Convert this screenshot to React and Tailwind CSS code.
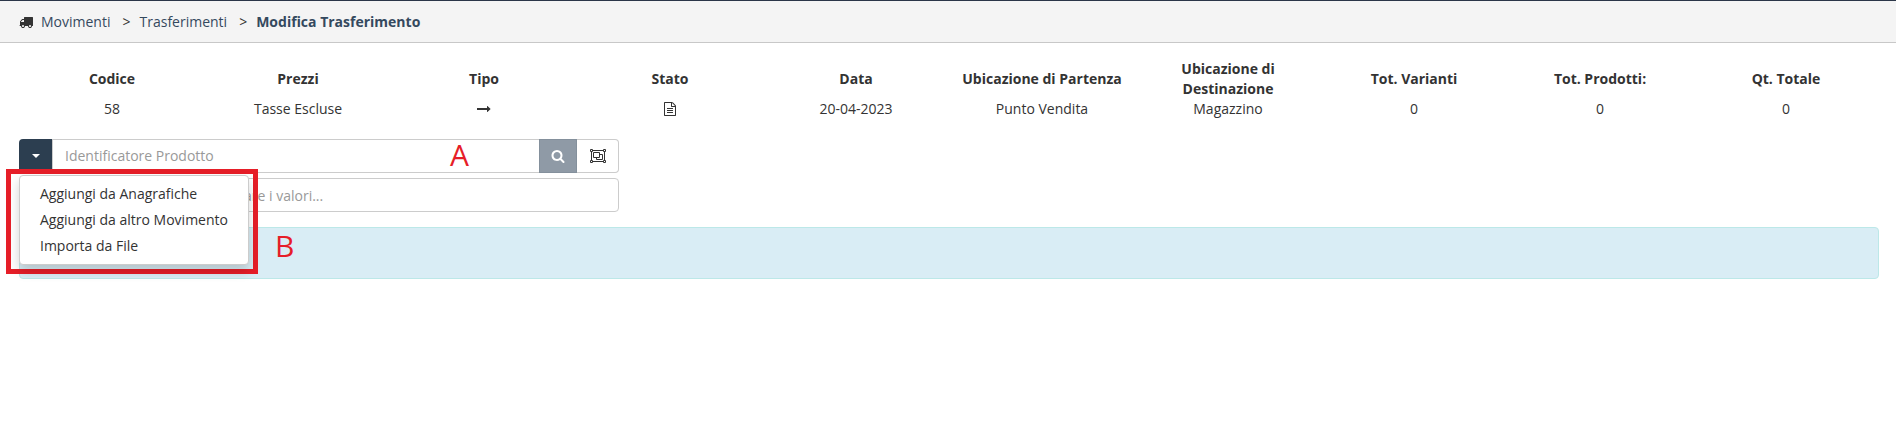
import React from 'react';

const Icon = ({ path, className }) => (
  <svg viewBox="0 0 1792 1792" fill="currentColor" className={className} aria-hidden="true">
    <path d={path} />
  </svg>
);

const TRUCK =
  'M640 1408q0-52-38-90t-90-38-90 38-38 90 38 90 90 38 90-38 38-90zm-384-512h384v-256h-158q-13 0-22 9l-195 195q-9 9-9 22v30zm1280 512q0-52-38-90t-90-38-90 38-38 90 38 90 90 38 90-38 38-90zm256-1088v1024q0 15-4 26.5t-13.5 18.5-16.5 11.5-23.5 6-22.5 2-25.5 0-22.5-.5q0 106-75 181t-181 75-181-75-75-181h-384q0 106-75 181t-181 75-181-75-75-181h-64q-3 0-22.5.5t-25.5 0-22.5-2-23.5-6-16.5-11.5-13.5-18.5-4-26.5q0-26 19-45t45-19v-320q0-8-.5-35t0-38 2.5-34.5 6.5-37 14-30.5 22.5-30l198-198q19-19 50.5-32t58.5-13h160v-192q0-26 19-45t45-19h1024q26 0 45 19t19 45z';
const ARROW =
  'M1728 893q0 14-10 24l-384 354q-16 14-35 6-19-9-19-29v-224h-1248q-14 0-23-9t-9-23v-192q0-14 9-23t23-9h1248v-224q0-21 19-29t35 5l384 350q10 10 10 23z';
const FILE_TEXT =
  'M1596 380q28 28 48 76t20 88v1152q0 40-28 68t-68 28h-1344q-40 0-68-28t-28-68v-1600q0-40 28-68t68-28h896q40 0 88 20t76 48zm-444-244v376h376q-10-29-22-41l-313-313q-12-12-41-22zm384 1528v-1024h-416q-40 0-68-28t-28-68v-416h-768v1536h1280zm-1024-864q0-14 9-23t23-9h704q14 0 23 9t9 23v64q0 14-9 23t-23 9h-704q-14 0-23-9t-9-23v-64zm736 224q14 0 23 9t9 23v64q0 14-9 23t-23 9h-704q-14 0-23-9t-9-23v-64q0-14 9-23t23-9h704zm0 256q14 0 23 9t9 23v64q0 14-9 23t-23 9h-704q-14 0-23-9t-9-23v-64q0-14 9-23t23-9h704z';
const SEARCH =
  'M1216 832q0-185-131.5-316.5t-316.5-131.5-316.5 131.5-131.5 316.5 131.5 316.5 316.5 131.5 316.5-131.5 131.5-316.5zm512 832q0 52-38 90t-90 38q-54 0-90-38l-343-342q-179 124-399 124-143 0-273.5-55.5t-225-150-150-225-55.5-273.5 55.5-273.5 150-225 225-150 273.5-55.5 273.5 55.5 225 150 150 225 55.5 273.5q0 220-124 399l343 343q37 37 37 90z';

const ObjectGroupIcon = () => (
  <svg viewBox="0 0 16 14" className="h-3.5 w-4" fill="none" stroke="currentColor" aria-hidden="true">
    <path d="M2.5 1.5h11M2.5 12.5h11M1.5 2.5v9M14.5 2.5v9" />
    <path d="M.5.5h2v2h-2zM13.5.5h2v2h-2zM.5 11.5h2v2h-2zM13.5 11.5h2v2h-2z" />
    <path d="M3.5 3.5h6v5h-6zM9.5 5.5h3v5h-6v-2" />
  </svg>
);

const columns = [
  { label: 'Codice', value: '58' },
  { label: 'Prezzi', value: 'Tasse Escluse' },
  { label: 'Tipo', value: <Icon path={ARROW} className="mx-auto size-3.5" /> },
  { label: 'Stato', value: <Icon path={FILE_TEXT} className="mx-auto size-3.5" /> },
  { label: 'Data', value: '20-04-2023' },
  { label: 'Ubicazione di Partenza', value: 'Punto Vendita' },
  { label: 'Ubicazione di Destinazione', value: 'Magazzino' },
  { label: 'Tot. Varianti', value: '0' },
  { label: 'Tot. Prodotti:', value: '0' },
  { label: 'Qt. Totale', value: '0' },
];

const menuItems = ['Aggiungi da Anagrafiche', 'Aggiungi da altro Movimento', 'Importa da File'];

const Breadcrumb = () => (
  <nav className="flex h-[43px] items-center border-t border-b border-t-[#2b3648] border-b-[#c8c8c8] bg-[#f4f4f4] px-[19px] text-[#34495e]">
    <Icon path={TRUCK} className="mr-2 size-3.5 text-[#333]" />
    <a href="#movimenti">Movimenti</a>
    <span className="mr-[9px] ml-3 text-[#333]">&gt;</span>
    <a href="#trasferimenti">Trasferimenti</a>
    <span className="mr-[9px] ml-3 text-[#333]">&gt;</span>
    <a href="#modifica" className="font-bold">Modifica Trasferimento</a>
  </nav>
);

const Summary = () => (
  <table className="w-full table-fixed text-center">
    <thead>
      <tr>
        {columns.map((col) => (
          <th key={col.label} className="px-2 py-0 align-middle font-bold">{col.label}</th>
        ))}
      </tr>
    </thead>
    <tbody>
      <tr>
        {columns.map((col) => (
          <td key={col.label} className="p-0 align-middle">{col.value}</td>
        ))}
      </tr>
    </tbody>
  </table>
);

const ActionsMenu = () => (
  <div className="absolute top-[30px] -left-[13px] z-10 border-5 border-[#e61e28] pt-px pr-1 pb-1 pl-2">
    <ul className="w-[230px] rounded-sm border border-[#ccc] bg-white py-[5px] shadow-[0_6px_12px_rgba(0,0,0,0.175)]">
      {menuItems.map((item) => (
        <li key={item}>
          <a href="#azione" className="block px-5 py-[3px] whitespace-nowrap">{item}</a>
        </li>
      ))}
    </ul>
  </div>
);

const ProductSearch = () => (
  <div className="relative flex h-[34px]">
    <button type="button" aria-label="Altre azioni" className="flex w-[33px] items-center justify-center rounded-l-sm bg-[#2c3e50]">
      <span className="border-x-4 border-t-4 border-x-transparent border-t-white" />
    </button>
    <input
      type="text"
      aria-label="Identificatore Prodotto"
      placeholder="Identificatore Prodotto"
      className="min-w-0 flex-1 border border-r-0 border-[#ccc] px-3 placeholder:text-[#999]"
    />
    <button type="button" aria-label="Cerca" className="flex w-[38px] items-center justify-center border border-[#84909c] bg-[#8f9aa6] text-white">
      <Icon path={SEARCH} className="size-3.5" />
    </button>
    <button type="button" aria-label="Selezione multipla" className="flex w-[42px] items-center justify-center rounded-r-sm border border-l-0 border-[#ccc] bg-white">
      <ObjectGroupIcon />
    </button>
    <ActionsMenu />
    <span className="absolute -top-0.5 left-[431px] text-3xl text-[#e61e28]">A</span>
    <span className="absolute top-[89px] left-[256px] z-10 text-3xl text-[#e61e28]">B</span>
  </div>
);

export default function App() {
  return (
    <div className="min-h-screen bg-white font-['Open_Sans',sans-serif] text-sm/5 text-[#333]">
      <Breadcrumb />
      <main className="pt-4 pr-[17px] pl-[19px]">
        <Summary />
        <div className="mt-5 flex max-w-[600px] flex-col gap-[5px]">
          <ProductSearch />
          <input
            type="text"
            aria-label="Valori"
            placeholder="Seleziona un attributo per mostrare i valori..."
            className="h-[34px] w-full rounded-sm border border-[#ccc] px-3 placeholder:text-[#999]"
          />
        </div>
        <div className="mt-[15px] h-[52px] rounded-sm border border-[#bce8e8] bg-[#d9edf5]" />
      </main>
    </div>
  );
}
